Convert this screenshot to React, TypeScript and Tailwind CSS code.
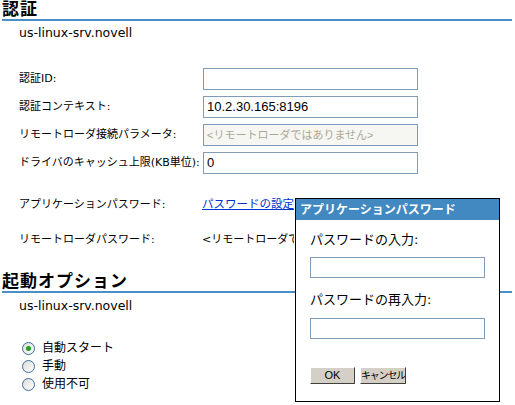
import React from "react";

const font = "font-['DejaVu_Sans','Noto_Sans_CJK_JP',sans-serif]";

function Field({
  label,
  value,
  disabled,
  placeholder,
}: {
  label: string;
  value?: string;
  disabled?: boolean;
  placeholder?: string;
}) {
  return (
    <div className="flex items-center h-[22px] pl-[19px]">
      <div className="w-[184px] text-[11px] text-black whitespace-nowrap">{label}</div>
      <div
        className={`w-[215px] h-[22px] border border-[#7f9db9] flex items-center px-[3px] font-['Liberation_Sans','Noto_Sans_CJK_JP',sans-serif] ${
          disabled ? "bg-[#f6f6f2] text-[#aca899] text-[11px]" : "bg-white text-black text-[13px]"
        }`}
      >
        {disabled ? placeholder : value}
      </div>
    </div>
  );
}

function Radio({ label, checked }: { label: string; checked?: boolean }) {
  return (
    <div className="flex items-center h-[18px] pl-[22px]">
      <span className="w-[13px] h-[13px] rounded-full border border-[#3a6e9c] bg-gradient-to-br from-[#dcdcd7] to-white flex items-center justify-center">
        {checked && <span className="w-[5px] h-[5px] rounded-full bg-[#21a121]" />}
      </span>
      <span className="ml-[7px] text-[12px] text-black">{label}</span>
    </div>
  );
}

export default function App() {
  return (
    <div className={`relative w-[515px] h-[405px] bg-white overflow-hidden ${font}`}>
      <div className="h-[19px] leading-[19px] ml-[2px] text-[17px] font-bold tracking-[1px] text-black">認証</div>
      <div className="h-[2px] w-[510px] ml-[2px] bg-[#4a8fc6]" />
      <div className="mt-[4px] h-[16px] leading-[16px] pl-[19px] text-[12.5px] text-black">us-linux-srv.novell</div>

      <div className="mt-[27px] flex flex-col gap-[6px]">
        <Field label="認証ID:" value="" />
        <Field label="認証コンテキスト:" value="10.2.30.165:8196" />
        <Field label="リモートローダ接続パラメータ:" disabled placeholder="<リモートローダではありません>" />
        <Field label="ドライバのキャッシュ上限(KB単位):" value="0" />
      </div>

      <div className="mt-[22px] h-[18px] flex items-center pl-[19px] text-[11px]">
        <div className="w-[183px]">アプリケーションパスワード:</div>
        <a className="text-[#0033cc] underline text-[11.5px]">パスワードの設定</a>
      </div>
      <div className="mt-[17px] h-[18px] flex items-center pl-[19px] text-[11px]">
        <div className="w-[183px]">リモートローダパスワード:</div>
        <div className="w-[92px] overflow-hidden whitespace-nowrap">&lt;リモートローダではありません&gt;</div>
      </div>

      <div className="mt-[23px] h-[19px] leading-[19px] ml-[2px] text-[17px] font-bold tracking-[1px] text-black">起動オプション</div>
      <div className="h-[2px] w-[510px] ml-[2px] bg-[#4a8fc6]" />
      <div className="mt-[5px] h-[16px] leading-[16px] pl-[19px] text-[12.5px] text-black">us-linux-srv.novell</div>

      <div className="mt-[25px] flex flex-col">
        <Radio label="自動スタート" checked />
        <Radio label="手動" />
        <Radio label="使用不可" />
      </div>

      <div className="absolute left-[295px] top-[198px] w-[205px] h-[204px] border border-black bg-white">
        <div className="h-[21px] bg-[#4189c0] text-white text-[12px] font-bold flex items-center pl-[4px]">
          アプリケーションパスワード
        </div>
        <div className="pl-[14px]">
          <div className="mt-[11px] h-[18px] flex items-center text-[13px]">パスワードの入力:</div>
          <div className="mt-[8px] w-[175px] h-[21px] border border-[#7f9db9] bg-white" />
          <div className="mt-[13px] h-[18px] flex items-center text-[13px]">パスワードの再入力:</div>
          <div className="mt-[9px] w-[175px] h-[21px] border border-[#7f9db9] bg-white" />
          <div className="mt-[28px] flex gap-[5px]">
            <button className="w-[45px] h-[17px] p-0 bg-[#d4d0c8] border border-t-white border-l-white border-r-[#404040] border-b-[#404040] text-[11px] font-['Liberation_Sans',sans-serif] flex items-center justify-center">
              OK
            </button>
            <button className="w-[46px] h-[17px] p-0 bg-[#d4d0c8] border border-t-white border-l-white border-r-[#404040] border-b-[#404040] text-[10px] tracking-[-1.2px] flex items-center justify-center whitespace-nowrap overflow-hidden">
              キャンセル
            </button>
          </div>
        </div>
      </div>
    </div>
  );
}
